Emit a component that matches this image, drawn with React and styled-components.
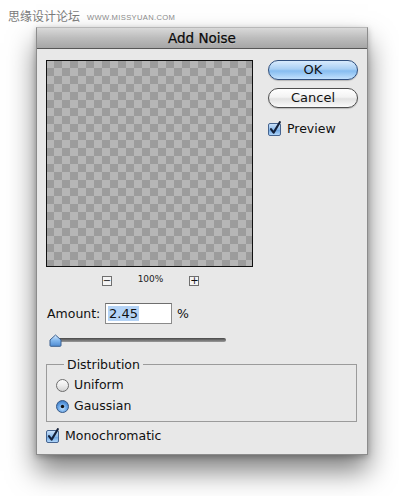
import React from "react";
import styled, { createGlobalStyle } from "styled-components";

const GlobalStyle = createGlobalStyle`
  html, body {
    margin: 0;
    padding: 0;
    background: #fff;
  }
  body {
    font-family: "DejaVu Sans", "Noto Sans", sans-serif;
  }
`;

const CheckBox = () => (
  <svg width="14" height="15" viewBox="0 0 14 15">
    <defs>
      <linearGradient id="cbFill" x1="0" y1="0" x2="0" y2="1">
        <stop offset="0" stopColor="#cfe4fa" />
        <stop offset="0.5" stopColor="#8dbcec" />
        <stop offset="0.55" stopColor="#6fa7e3" />
        <stop offset="1" stopColor="#b6dafc" />
      </linearGradient>
    </defs>
    <rect x="0.5" y="2.5" width="12" height="12" rx="1.5" fill="url(#cbFill)" stroke="#46648f" />
    <path d="M3 8.2 L5.6 11.6 L11.8 1.2" fill="none" stroke="#13203a" strokeWidth="2.1" strokeLinecap="round" strokeLinejoin="round" />
  </svg>
);

const Radio = ({ on }) => (
  <svg width="13" height="13" viewBox="0 0 13 13">
    <defs>
      <linearGradient id="rOff" x1="0" y1="0" x2="0" y2="1">
        <stop offset="0" stopColor="#fdfdfd" />
        <stop offset="0.5" stopColor="#ececec" />
        <stop offset="1" stopColor="#d0d0d0" />
      </linearGradient>
      <radialGradient id="rOn" cx="0.5" cy="0.65" r="0.6">
        <stop offset="0" stopColor="#bfe0ff" />
        <stop offset="0.6" stopColor="#6aa6e6" />
        <stop offset="1" stopColor="#3f7ec7" />
      </radialGradient>
    </defs>
    <circle cx="6.5" cy="6.5" r="6" fill={on ? "url(#rOn)" : "url(#rOff)"} stroke={on ? "#3a5a86" : "#6d6d6d"} />
    {on && <circle cx="6.5" cy="6.5" r="1.7" fill="#111" />}
  </svg>
);

const Thumb = () => (
  <svg width="13" height="13" viewBox="0 0 13 13">
    <defs>
      <linearGradient id="thumb" x1="0" y1="0" x2="0" y2="1">
        <stop offset="0" stopColor="#d9ecff" />
        <stop offset="0.5" stopColor="#7fb5ec" />
        <stop offset="1" stopColor="#4f8bd2" />
      </linearGradient>
    </defs>
    <path d="M1 11.5 L1 6 L6.5 1 L12 6 L12 11.5 Q12 12.3 11 12.3 L2 12.3 Q1 12.3 1 11.5 Z" fill="url(#thumb)" stroke="#3b5f8e" />
  </svg>
);

const App = () => (
  <>
    <GlobalStyle />
    <Page>
      <Watermark>
        <WatermarkCn>思缘设计论坛</WatermarkCn>
        <WatermarkUrl>www.MISSYUAN.COM</WatermarkUrl>
      </Watermark>
      <Dialog>
        <TitleBar>Add Noise</TitleBar>
        <Body>
          <TopRow>
            <PreviewColumn>
              <PreviewBox />
              <ZoomRow>
                <ZoomButton>−</ZoomButton>
                <ZoomText>100%</ZoomText>
                <ZoomButton>+</ZoomButton>
              </ZoomRow>
            </PreviewColumn>
            <ButtonColumn>
              <PushButton $primary>OK</PushButton>
              <PushButton>Cancel</PushButton>
              <CheckRow $top={5}>
                <CheckBox />
                <Label>Preview</Label>
              </CheckRow>
            </ButtonColumn>
          </TopRow>

          <AmountRow>
            <Label>Amount:</Label>
            <AmountInput>
              <Selected>2.45</Selected>
            </AmountInput>
            <Label>%</Label>
          </AmountRow>

          <SliderRow>
            <Track />
            <ThumbWrap>
              <Thumb />
            </ThumbWrap>
          </SliderRow>

          <Group>
            <Legend>Distribution</Legend>
            <RadioRow>
              <Radio />
              <Label>Uniform</Label>
            </RadioRow>
            <RadioRow>
              <Radio on />
              <Label>Gaussian</Label>
            </RadioRow>
          </Group>

          <CheckRow $top={6}>
            <CheckBox />
            <Label>Monochromatic</Label>
          </CheckRow>
        </Body>
      </Dialog>
    </Page>
  </>
);

const Page = styled.div`
  width: 399px;
  height: 496px;
  padding: 9px 0 0 8px;
  box-sizing: border-box;
  overflow: hidden;
`;

const Watermark = styled.div`
  display: flex;
  align-items: center;
  gap: 7px;
  height: 14px;
`;

const WatermarkCn = styled.span`
  font-family: "Noto Sans CJK SC", sans-serif;
  font-size: 12px;
  color: #7a7a7a;
  line-height: 14px;
`;

const WatermarkUrl = styled.span`
  font-family: "Liberation Sans", Arial, sans-serif;
  font-size: 7.6px;
  letter-spacing: 0.35px;
  text-transform: uppercase;
  color: #8a8a8a;
  padding-top: 2px;
`;

const Dialog = styled.div`
  margin: 4px 0 0 28px;
  width: 332px;
  height: 428px;
  box-sizing: border-box;
  border: 1px solid #8c8c8c;
  border-top-color: #b8b8b8;
  background: #e8e8e8;
  box-shadow: 0 16px 26px rgba(0, 0, 0, 0.5), 0 2px 6px rgba(0, 0, 0, 0.25);
  display: flex;
  flex-direction: column;
`;

const TitleBar = styled.div`
  height: 21px;
  box-sizing: border-box;
  border-bottom: 1px solid #575757;
  background: linear-gradient(#d9d9d9, #bcbcbc 50%, #a6a6a6);
  color: #0a0a0a;
  font-size: 13.5px;
  text-align: center;
  line-height: 20px;
  -webkit-text-stroke: 0.25px #0a0a0a;
  text-shadow: 0 1px 0 rgba(255, 255, 255, 0.35);
`;

const Body = styled.div`
  padding: 11px 10px 0 9px;
  display: flex;
  flex-direction: column;
`;

const TopRow = styled.div`
  display: flex;
  align-items: flex-start;
`;

const PreviewColumn = styled.div`
  display: flex;
  flex-direction: column;
  width: 207px;
`;

const PreviewBox = styled.div`
  width: 207px;
  height: 207px;
  box-sizing: border-box;
  border: 1px solid #111;
  background: repeating-conic-gradient(#9c9c9c 0 25%, #b6b6b6 0 50%) -1px -1px / 16px 16px;
`;

const ZoomRow = styled.div`
  display: flex;
  justify-content: center;
  align-items: center;
  gap: 26px;
  margin-top: 9px;
  padding-left: 2px;
`;

const ZoomButton = styled.div`
  width: 10px;
  height: 10px;
  box-sizing: border-box;
  border: 1px solid #6f6f6f;
  background: #f4f4f4;
  font-family: "DejaVu Sans", sans-serif;
  font-size: 10px;
  line-height: 7px;
  text-align: center;
  color: #111;
`;

const ZoomText = styled.span`
  font-family: "DejaVu Sans", sans-serif;
  font-size: 9px;
  color: #222;
  margin-top: -4px;
`;

const ButtonColumn = styled.div`
  display: flex;
  flex-direction: column;
  gap: 8px;
  margin-left: 15px;
`;

const PushButton = styled.div`
  width: 90px;
  height: 20px;
  box-sizing: border-box;
  border-radius: 10px;
  border: 1px solid ${(p) => (p.$primary ? "#2f4f7e" : "#4e4e4e")};
  background: ${(p) =>
    p.$primary
      ? "linear-gradient(#d8ebfd, #a9cff4 45%, #86bcf0 55%, #c2e1fd)"
      : "linear-gradient(#ffffff, #f3f3f3 45%, #e2e2e2 55%, #fafafa)"};
  box-shadow: 0 1px 1px rgba(0, 0, 0, 0.2);
  font-size: 13px;
  line-height: 18px;
  text-align: center;
  color: #111;
`;

const CheckRow = styled.div`
  display: flex;
  align-items: flex-end;
  gap: 5px;
  margin-top: ${(p) => p.$top}px;
  height: 15px;
`;

const Label = styled.span`
  font-size: 12.5px;
  line-height: 14px;
  color: #111;
`;

const AmountRow = styled.div`
  display: flex;
  align-items: center;
  margin-top: 17px;
  padding-left: 1px;
  height: 21px;

  ${Label}:first-child {
    width: 58px;
  }
  ${Label}:last-child {
    margin-left: 5px;
  }
`;

const AmountInput = styled.div`
  width: 67px;
  height: 21px;
  box-sizing: border-box;
  border: 1px solid #8a8a8a;
  border-top-color: #6e6e6e;
  background: #fff;
  padding: 2px 0 0 2px;
  font-size: 13px;
  line-height: 15px;
  color: #111;
`;

const Selected = styled.span`
  background: #b4d3f6;
  padding: 0 1px;
`;

const SliderRow = styled.div`
  position: relative;
  height: 13px;
  margin-top: 8px;
  display: flex;
  align-items: center;
`;

const Track = styled.div`
  margin-left: 6px;
  width: 174px;
  height: 4px;
  border-radius: 2px;
  margin-top: 3px;
  background: linear-gradient(#474747, #9a9a9a);
`;

const ThumbWrap = styled.div`
  position: absolute;
  left: 3px;
  top: 0;
  height: 13px;
`;

const Group = styled.fieldset`
  margin: 12px 0 0 0;
  padding: 0 9px 8px 9px;
  border: 1px solid #9b9b9b;
  display: flex;
  flex-direction: column;
  gap: 7px;
`;

const Legend = styled.legend`
  margin-left: 8px;
  padding: 0 3px;
  font-size: 12.5px;
  line-height: 15px;
  color: #111;
`;

const RadioRow = styled.div`
  display: flex;
  align-items: center;
  gap: 5px;
  height: 14px;

  &:first-of-type {
    margin-top: 6px;
  }
`;

export default App;
